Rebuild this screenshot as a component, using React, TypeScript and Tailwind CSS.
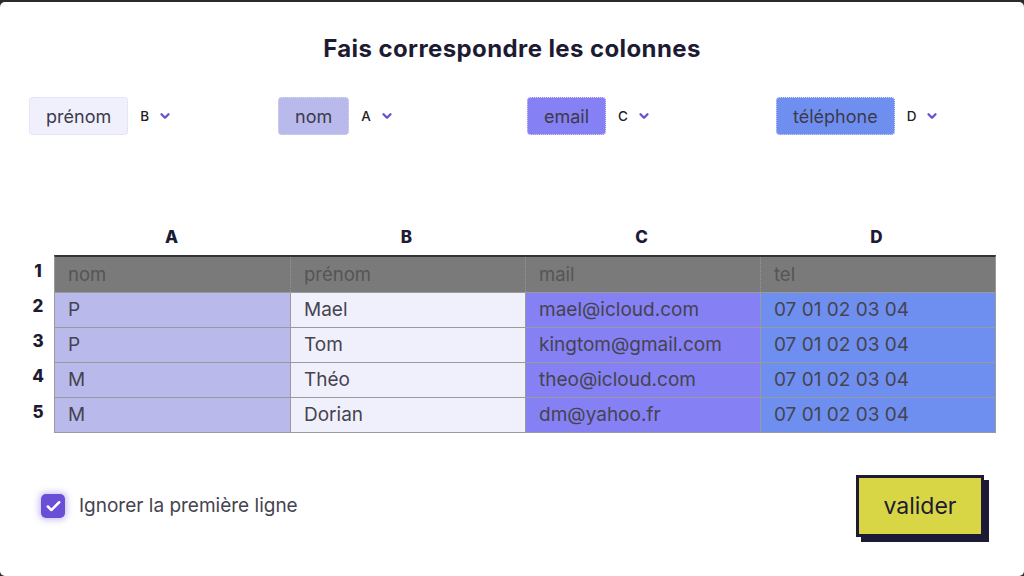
import { ChevronDown, Check } from 'lucide-react'

const mappings = [
  { label: 'prénom', col: 'B', bg: 'bg-[#f0f0fc]' },
  { label: 'nom', col: 'A', bg: 'bg-[#b9b9ec]' },
  { label: 'email', col: 'C', bg: 'bg-[#8580f3]' },
  { label: 'téléphone', col: 'D', bg: 'bg-[#6f8ff0]' },
]

const colBgs = ['bg-[#b9b9ec]', 'bg-[#f0f0fc]', 'bg-[#8580f3]', 'bg-[#6f8ff0]']

const header = ['nom', 'prénom', 'mail', 'tel']

const rows = [
  ['P', 'Mael', 'mael@icloud.com', '07 01 02 03 04'],
  ['P', 'Tom', 'kingtom@gmail.com', '07 01 02 03 04'],
  ['M', 'Théo', 'theo@icloud.com', '07 01 02 03 04'],
  ['M', 'Dorian', 'dm@yahoo.fr', '07 01 02 03 04'],
]

export default function App() {
  return (
    <div className="h-[576px] w-[1024px] bg-[#2b2b2b] pt-[2px] overflow-hidden" style={{ fontFamily: 'Inter, "Liberation Sans", sans-serif' }}>
      <div className="h-[574px] bg-white rounded-[5px] flex flex-col">
        {/* Title */}
        <h1 className="mt-[32px] text-center text-[24px] leading-[30px] font-bold tracking-[0.4px] text-[#1d1b33]">
          Fais correspondre les colonnes
        </h1>

        {/* Column mapping */}
        <div className="mt-[33px] pl-[29px] grid grid-cols-[249px_249px_249px_249px]">
          {mappings.map((m) => (
            <div key={m.label} className="flex items-center">
              <div className={`${m.bg} h-[38px] px-[16px] rounded-[4px] border border-dotted border-[#d8d8f0] flex items-center text-[18px] text-[#3c3a4c]`}>
                {m.label}
              </div>
              <span className="ml-[12px] text-[13.5px] font-medium text-[#222]">{m.col}</span>
              <ChevronDown className="ml-[9px] w-[14px] h-[14px] text-[#6a4fd6]" strokeWidth={4} />
            </div>
          ))}
        </div>

        {/* Table */}
        <div className="mt-[86px] pl-[28px] flex flex-col">
          <div className="ml-[26px] flex h-[34px] items-center">
            {['A', 'B', 'C', 'D'].map((l) => (
              <div key={l} className="w-[235px] text-center text-[17px] font-extrabold text-[#1d1b33]">{l}</div>
            ))}
          </div>
          <div className="flex">
            <div className="w-[26px] flex flex-col pt-[2px]">
              {[1, 2, 3, 4, 5].map((n) => (
                <div key={n} className="h-[35.2px] flex items-center justify-center pr-[6px] pb-[6px] text-[17px] font-extrabold text-[#1d1b33]">{n}</div>
              ))}
            </div>
            <div className="w-[942px] border-t-2 border-t-[#333] border-l border-r border-b border-[#9a9a9a]">
              <div className="flex h-[35px] bg-[#7a7a7a]">
                {header.map((h, i) => (
                  <div key={h} className={`w-[235px] px-[13px] flex items-center text-[18.5px] text-[#555] ${i > 0 ? 'border-l border-dotted border-[#999]' : ''}`}>{h}</div>
                ))}
              </div>
              {rows.map((r, ri) => (
                <div key={ri} className="flex h-[35px] border-t border-[#9a9a9a]">
                  {r.map((c, ci) => (
                    <div key={ci} className={`w-[235px] ${colBgs[ci]} px-[13px] flex items-center text-[19px] text-[#45434f] ${ci > 0 ? 'border-l border-[#9a9a9a]' : ''}`}>{c}</div>
                  ))}
                </div>
              ))}
            </div>
          </div>
        </div>

        {/* Footer */}
        <div className="mt-[42px] pl-[41px] pr-[40px] flex items-center justify-between">
          <label className="flex items-center gap-[14px]">
            <span className="w-[24px] h-[24px] rounded-[5px] bg-[#6a4fd6] flex items-center justify-center shadow-[0_0_6px_2px_rgba(106,79,214,0.35)]">
              <Check className="w-[17px] h-[17px] text-white" strokeWidth={3.5} />
            </span>
            <span className="text-[19px] text-[#45434f]">Ignorer la première ligne</span>
          </label>
          <button className="w-[128px] h-[62px] bg-[#d8d645] border-[3px] border-[#1d1a36] shadow-[5px_5px_0_#1d1a36] text-[23px] text-[#1d1b33]">
            valider
          </button>
        </div>
      </div>
    </div>
  )
}
